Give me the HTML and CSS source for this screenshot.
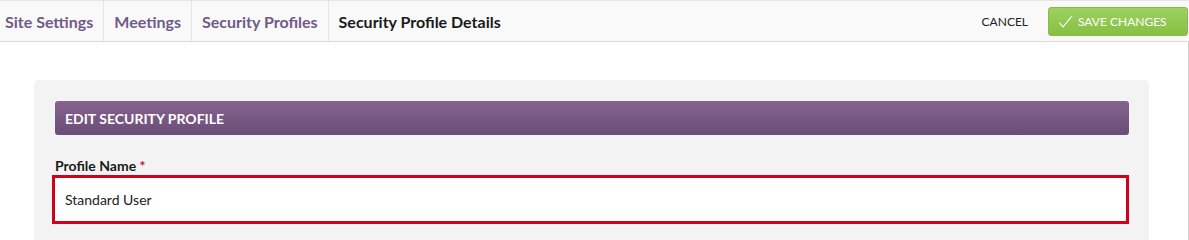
FILE: index.html
```html
<!DOCTYPE html>
<html>
<head>
<meta charset="utf-8">
<link rel="stylesheet" href="styles.css">
</head>
<body>
<div class="topbar">
  <nav class="crumbs">
    <a class="crumb link first">Site Settings</a>
    <a class="crumb link">Meetings</a>
    <a class="crumb link">Security Profiles</a>
    <span class="crumb current">Security Profile Details</span>
  </nav>
  <div class="actions">
    <button class="cancel">CANCEL</button>
    <button class="save">
      <svg class="check" width="15" height="13" viewBox="0 0 15 13"><path d="M1 7.5 L5 11.8 L14 1" fill="none" stroke="#ffffff" stroke-width="1.1"/></svg>
      <span>SAVE CHANGES</span>
    </button>
  </div>
</div>
<div class="main">
  <div class="panel">
    <div class="panel-head">EDIT SECURITY PROFILE</div>
    <label class="field-label">Profile Name <span class="req">*</span></label>
    <div class="input">Standard User</div>
  </div>
</div>
</body>
</html>
```

FILE: styles.css
```css
html, body {
  margin: 0;
  padding: 0;
  background: #ffffff;
  font-family: Lato, "Open Sans", sans-serif;
}
.topbar {
  display: flex;
  justify-content: space-between;
  align-items: center;
  height: 40px;
  border-top: 1px solid #e6e6e6;
  border-bottom: 1px solid #d9d9d9;
  background: #f9f9f9;
}
.crumbs {
  display: flex;
  height: 100%;
}
.crumb {
  display: flex;
  align-items: center;
  padding: 0 10px;
  font-size: 16px;
  font-weight: 700;
  border-right: 1px solid #e3e3e3;
  white-space: nowrap;
}
.crumb.first {
  padding-left: 5px;
}
.crumb.link {
  color: #6f5b8a;
}
.crumb.current {
  color: #1a1a1a;
  border-right: none;
}
.actions {
  display: flex;
  align-items: center;
  gap: 20px;
  padding-right: 1px;
}
.cancel {
  border: none;
  background: none;
  padding: 0;
  font-family: Lato, sans-serif;
  font-size: 12px;
  color: #222;
}
.save {
  display: flex;
  align-items: center;
  gap: 5px;
  height: 29px;
  width: 140px;
  padding: 0 0 0 9px;
  border: 1px solid #86bd48;
  border-radius: 3px;
  background: linear-gradient(#9fd160, #86c043);
  color: #ffffff;
  font-family: Lato, sans-serif;
  font-size: 12px;
}
.check {
  display: block;
}
.main {
  padding: 38px 39px 0 34px;
  border-right: 1px solid #cfcfcf;
}
.panel {
  background: #f3f3f3;
  border-radius: 5px;
  padding: 21px 20px 30px 21px;
}
.panel-head {
  height: 34px;
  box-sizing: border-box;
  display: flex;
  align-items: center;
  padding-left: 10px;
  border-radius: 3px;
  background: linear-gradient(#87628f, #694e77);
  color: #ffffff;
  font-size: 14px;
  font-weight: 700;
}
.field-label {
  display: block;
  margin-top: 22px;
  font-size: 14px;
  font-weight: 700;
  color: #1a1a1a;
  line-height: 17px;
}
.req {
  color: #c8102e;
}
.input {
  margin: 1px 0 0 -3px;
  height: 49px;
  box-sizing: border-box;
  border: 3px solid #d0021b;
  background: #ffffff;
  display: flex;
  align-items: center;
  padding-left: 10px;
  font-size: 14px;
  color: #222;
}
```
